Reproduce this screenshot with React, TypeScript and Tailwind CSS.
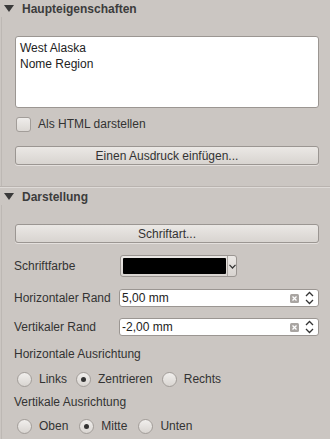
import React from 'react'

const font = { fontFamily: '"Liberation Sans", Arial, sans-serif' }

const SectionHeader = ({ title }: { title: string }) => (
  <div className="flex items-center h-[17px] pl-[4px] gap-[8px]">
    <svg width="10" height="7" viewBox="0 0 10 7">
      <path d="M0 0 H10 L5 7 Z" fill="#3a3a3a" />
    </svg>
    <span className="font-bold text-[12px] text-[#3c3c3c]">{title}</span>
  </div>
)

const PushButton = ({ label }: { label: string }) => (
  <div className="h-[19px] w-[304px] flex items-center justify-center rounded-[3px] border border-[#9b9692] bg-gradient-to-b from-[#ebe8e5] to-[#d8d4d0] text-[12px] text-[#333] shadow-[0_1px_0_#e4e0dd]">
    {label}
  </div>
)

const Radio = ({ checked }: { checked?: boolean }) => (
  <div className="w-[15px] h-[15px] rounded-full border border-[#a29d99] bg-gradient-to-b from-[#f1efed] to-[#d9d5d1] flex items-center justify-center shrink-0">
    {checked && <div className="w-[5px] h-[5px] rounded-full bg-[#333]" />}
  </div>
)

const RadioItem = ({ label, checked }: { label: string; checked?: boolean }) => (
  <div className="flex items-center gap-[7px] text-[12px] text-[#333]">
    <Radio checked={checked} />
    <span>{label}</span>
  </div>
)

const SpinField = ({ value }: { value: string }) => (
  <div className="flex items-center h-[18px] w-[200px] bg-white border border-[#9b9692] rounded-[3px] pl-[2px] pr-[4px] text-[12px] text-[#222]">
    <span className="flex-1">{value}</span>
    <svg width="9" height="9" viewBox="0 0 9 9" className="mr-[6px]">
      <rect x="0" y="0" width="9" height="9" rx="1.5" fill="#a9a5a2" />
      <path d="M2.5 2.5 L6.5 6.5 M6.5 2.5 L2.5 6.5" stroke="#fff" strokeWidth="1.3" />
    </svg>
    <svg width="9" height="14" viewBox="0 0 9 14">
      <path d="M1 5 L4.5 1.5 L8 5" fill="none" stroke="#333" strokeWidth="1.3" />
      <path d="M1 9 L4.5 12.5 L8 9" fill="none" stroke="#333" strokeWidth="1.3" />
    </svg>
  </div>
)

export default function App() {
  return (
    <div className="w-[330px] h-[439px] overflow-hidden bg-[#cbc6c2]" style={font}>
      <div className="h-[187px] border-b border-[#b9b3af]">
        <SectionHeader title="Haupteigenschaften" />
        <div className="ml-[1px] border-l border-[#bdb8b4] pl-[13px] h-[169px] pt-[19px]">
          <div className="w-[304px] h-[72px] bg-white border border-[#9b9692] rounded-[3px] px-[4px] pt-[3px] text-[12px] leading-[16px] text-[#222]">
            <div>West Alaska</div>
            <div>Nome Region</div>
          </div>
          <div className="flex items-center gap-[7px] mt-[7px] pl-[1px] text-[12px] text-[#333]">
            <div className="w-[15px] h-[15px] rounded-[3px] border border-[#a29d99] bg-gradient-to-b from-[#efedeb] to-[#dcd8d4]" />
            <span>Als HTML darstellen</span>
          </div>
          <div className="mt-[13px]">
            <PushButton label="Einen Ausdruck einfügen..." />
          </div>
        </div>
      </div>
      <div className="border-t border-[#dedad7]">
        <SectionHeader title="Darstellung" />
        <div className="ml-[1px] border-l border-[#bdb8b4] pl-[13px] pt-[19px] h-[260px]">
          <PushButton label="Schriftart..." />
          <div className="flex items-center mt-[12px]">
            <span className="w-[106px] -ml-[1px] text-[12px] text-[#333]">Schriftfarbe</span>
            <div className="w-[117px] h-[22px] flex items-center rounded-[3px] border border-[#9b9692] bg-gradient-to-b from-[#ebe8e5] to-[#d8d4d0] pl-[2px]">
              <div className="w-[103px] h-[16px] bg-black rounded-[1px]" />
              <div className="ml-[1px] h-full border-l border-[#aaa5a1] flex items-center justify-center flex-1">
                <svg width="7" height="5" viewBox="0 0 7 5">
                  <path d="M0.5 0.8 L3.5 4 L6.5 0.8" fill="none" stroke="#333" strokeWidth="1.2" />
                </svg>
              </div>
            </div>
          </div>
          <div className="flex items-center mt-[12px]">
            <span className="w-[105px] -ml-[1px] text-[12px] text-[#333]">Horizontaler Rand</span>
            <SpinField value="5,00 mm" />
          </div>
          <div className="flex items-center mt-[11px]">
            <span className="w-[105px] -ml-[1px] text-[12px] text-[#333]">Vertikaler Rand</span>
            <SpinField value="-2,00 mm" />
          </div>
          <div className="mt-[10px] -ml-[1px] h-[16px] leading-[16px] text-[12px] text-[#333]">Horizontale Ausrichtung</div>
          <div className="flex items-center gap-[9px] mt-[8px] pl-[2px]">
            <RadioItem label="Links" />
            <RadioItem label="Zentrieren" checked />
            <RadioItem label="Rechts" />
          </div>
          <div className="mt-[6px] -ml-[1px] h-[16px] leading-[16px] text-[12px] text-[#333]">Vertikale Ausrichtung</div>
          <div className="flex items-center gap-[11px] mt-[7px] pl-[2px]">
            <RadioItem label="Oben" />
            <RadioItem label="Mitte" checked />
            <RadioItem label="Unten" />
          </div>
        </div>
      </div>
    </div>
  )
}
